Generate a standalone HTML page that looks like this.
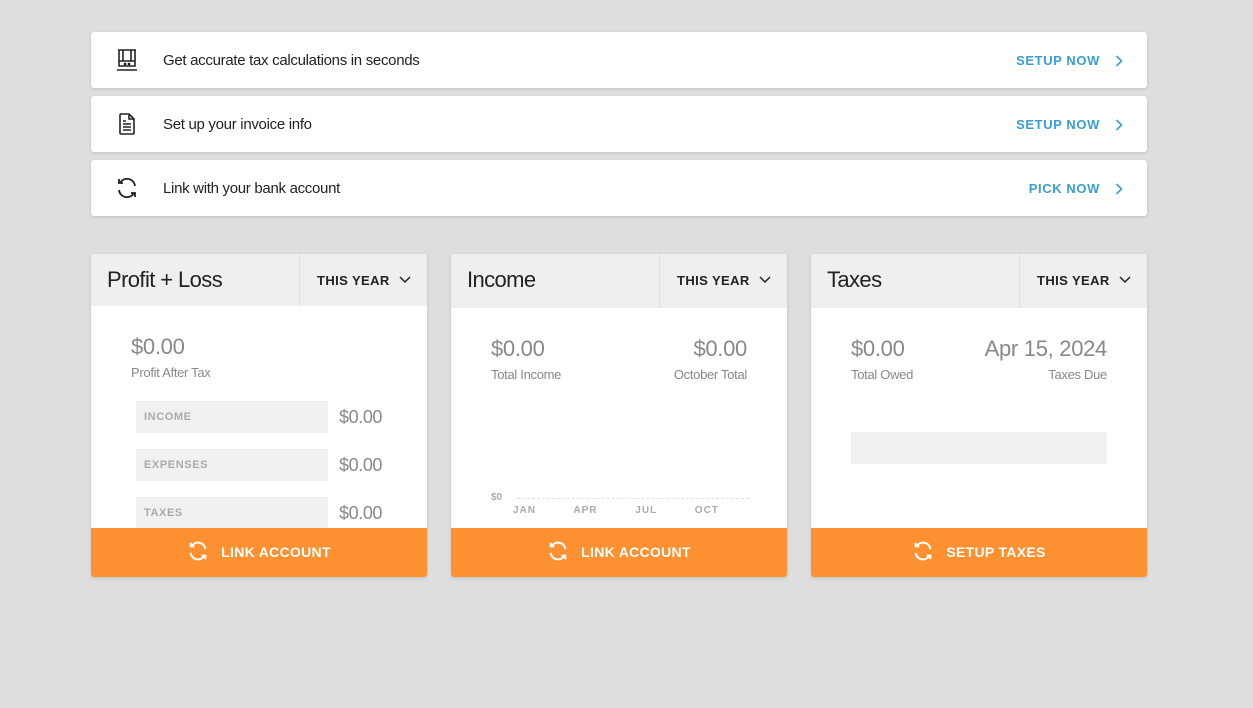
<!DOCTYPE html>
<html><head><style>
body{margin:0;background:#dedede;font-family:"Liberation Sans",sans-serif;width:1253px;height:708px;overflow:hidden;position:relative}
.ban{position:absolute;left:91px;width:1056px;height:56px;background:#fff;border-radius:3px;box-shadow:0 1px 3px rgba(0,0,0,.15)}
.ban .t{position:absolute;left:72px;top:20px;font-size:15px;color:#222;letter-spacing:-.3px}
.ban .a{position:absolute;right:47px;top:21px;font-size:13px;font-weight:bold;color:#3a9fd0;letter-spacing:.6px}
.ban svg.c{position:absolute;right:24px;top:23px}
.ban svg.i{position:absolute;left:24px;top:16px}
.card{position:absolute;top:254px;width:336px;height:323px;background:#fff;border-radius:3px;box-shadow:0 1px 3px rgba(0,0,0,.15);overflow:hidden}
.hd{height:52px;background:#efefef;position:relative}
.hd .ti{position:absolute;left:16px;top:13px;font-size:22px;color:#222;letter-spacing:-.6px}
.hd .dd{position:absolute;left:208px;top:0;height:52px;right:0;border-left:1px solid #e0e0e0}
.hd .dd span{position:absolute;left:17px;top:19px;font-size:13px;font-weight:bold;color:#222;letter-spacing:.4px}
.hd .dd svg{position:absolute;right:16px;top:22px}
.ft{position:absolute;left:0;right:0;bottom:0;height:49px;background:#fd9031;color:#fff;font-weight:bold;font-size:14px;letter-spacing:.3px;text-align:center;line-height:49px}
.ft svg{vertical-align:middle;margin-right:12px;margin-top:-4px}
.big{position:absolute;font-size:22px;color:#888;letter-spacing:-.3px}
.sm{position:absolute;font-size:13px;color:#888;letter-spacing:-.3px}
.row{position:absolute;left:45px;width:192px;height:32px;background:#f1f1f1;font-size:11px;color:#aaa;letter-spacing:.6px;line-height:32px;text-indent:8px;font-weight:bold}
.rv{position:absolute;left:248px;font-size:18px;color:#888;letter-spacing:-.4px}
</style></head><body>
<div class="ban" style="top:32px">
<svg class="i" width="24" height="24" viewBox="0 0 24 24" fill="none" stroke="#222" stroke-width="1.6"><path d="M3 2h18M4 2v16h16V2M8 2v11M16 2v11M4 13h16M2 22h20"/><circle cx="10" cy="16" r=".6" fill="#222"/><circle cx="14" cy="16" r=".6" fill="#222"/></svg>
<div class="t">Get accurate tax calculations in seconds</div><div class="a">SETUP NOW</div><svg class="c" width="8" height="12"><path d="M1.5 1l5 5-5 5" fill="none" stroke="#3a9fd0" stroke-width="1.6"/></svg></div>
<div class="ban" style="top:96px">
<svg class="i" width="24" height="24" viewBox="0 0 24 24" fill="none" stroke="#222" stroke-width="1.6"><path d="M5 2h9l5 5v14a1 1 0 0 1-1 1H6a1 1 0 0 1-1-1V3a1 1 0 0 1 1-1zM14 2v5h5M8 12h8M8 15h8M8 18h8M8 9h3"/></svg>
<div class="t">Set up your invoice info</div><div class="a">SETUP NOW</div><svg class="c" width="8" height="12"><path d="M1.5 1l5 5-5 5" fill="none" stroke="#3a9fd0" stroke-width="1.6"/></svg></div>
<div class="ban" style="top:160px">
<svg class="i" width="24" height="24" viewBox="0 0 24 24" fill="none" stroke="#222" stroke-width="1.8"><path d="M20 10A8 8 0 0 0 5 7M4 3v4h4M4 14a8 8 0 0 0 15 3M20 21v-4h-4"/></svg>
<div class="t">Link with your bank account</div><div class="a">PICK NOW</div><svg class="c" width="8" height="12"><path d="M1.5 1l5 5-5 5" fill="none" stroke="#3a9fd0" stroke-width="1.6"/></svg></div>

<div class="card" style="left:91px">
<div class="hd"><div class="ti">Profit + Loss</div><div class="dd"><span>THIS YEAR</span><svg width="12" height="8"><path d="M1 1l5 5 5-5" fill="none" stroke="#222" stroke-width="1.5"/></svg></div></div>
<div class="big" style="left:40px;top:80px">$0.00</div><div class="sm" style="left:40px;top:111px">Profit After Tax</div>
<div class="row" style="top:147px">INCOME</div><div class="rv" style="top:153px">$0.00</div>
<div class="row" style="top:195px">EXPENSES</div><div class="rv" style="top:201px">$0.00</div>
<div class="row" style="top:243px">TAXES</div><div class="rv" style="top:249px">$0.00</div>
<div class="ft"><svg width="22" height="22" viewBox="0 0 24 24" fill="none" stroke="#fff" stroke-width="2.2"><path d="M20 10A8 8 0 0 0 5 7M4 3v4h4M4 14a8 8 0 0 0 15 3M20 21v-4h-4"/></svg>LINK ACCOUNT</div></div>

<div class="card" style="left:451px">
<div class="hd" style="height:54px"><div class="ti">Income</div><div class="dd" style="height:54px"><span>THIS YEAR</span><svg width="12" height="8"><path d="M1 1l5 5 5-5" fill="none" stroke="#222" stroke-width="1.5"/></svg></div></div>
<div class="big" style="left:40px;top:82px">$0.00</div><div class="sm" style="left:40px;top:113px">Total Income</div>
<div class="big" style="right:40px;top:82px">$0.00</div><div class="sm" style="right:40px;top:113px">October Total</div>
<div style="position:absolute;left:40px;top:238px;font-size:10px;color:#aaa;font-weight:bold">$0</div>
<div style="position:absolute;left:66px;right:38px;top:244px;border-top:1px dashed #e2e2e2"></div>
<div style="position:absolute;left:62px;top:251px;font-size:10px;color:#aaa;font-weight:bold;letter-spacing:1px;word-spacing:34px">JAN APR JUL OCT</div>
<div class="ft"><svg width="22" height="22" viewBox="0 0 24 24" fill="none" stroke="#fff" stroke-width="2.2"><path d="M20 10A8 8 0 0 0 5 7M4 3v4h4M4 14a8 8 0 0 0 15 3M20 21v-4h-4"/></svg>LINK ACCOUNT</div></div>

<div class="card" style="left:811px">
<div class="hd" style="height:54px"><div class="ti">Taxes</div><div class="dd" style="height:54px"><span>THIS YEAR</span><svg width="12" height="8"><path d="M1 1l5 5 5-5" fill="none" stroke="#222" stroke-width="1.5"/></svg></div></div>
<div class="big" style="left:40px;top:82px">$0.00</div><div class="sm" style="left:40px;top:113px">Total Owed</div>
<div class="big" style="right:40px;top:82px">Apr 15, 2024</div><div class="sm" style="right:40px;top:113px">Taxes Due</div>
<div style="position:absolute;left:40px;right:40px;top:178px;height:32px;background:#f1f1f1"></div>
<div class="ft"><svg width="22" height="22" viewBox="0 0 24 24" fill="none" stroke="#fff" stroke-width="2.2"><path d="M20 10A8 8 0 0 0 5 7M4 3v4h4M4 14a8 8 0 0 0 15 3M20 21v-4h-4"/></svg>SETUP TAXES</div></div>
</body></html>
